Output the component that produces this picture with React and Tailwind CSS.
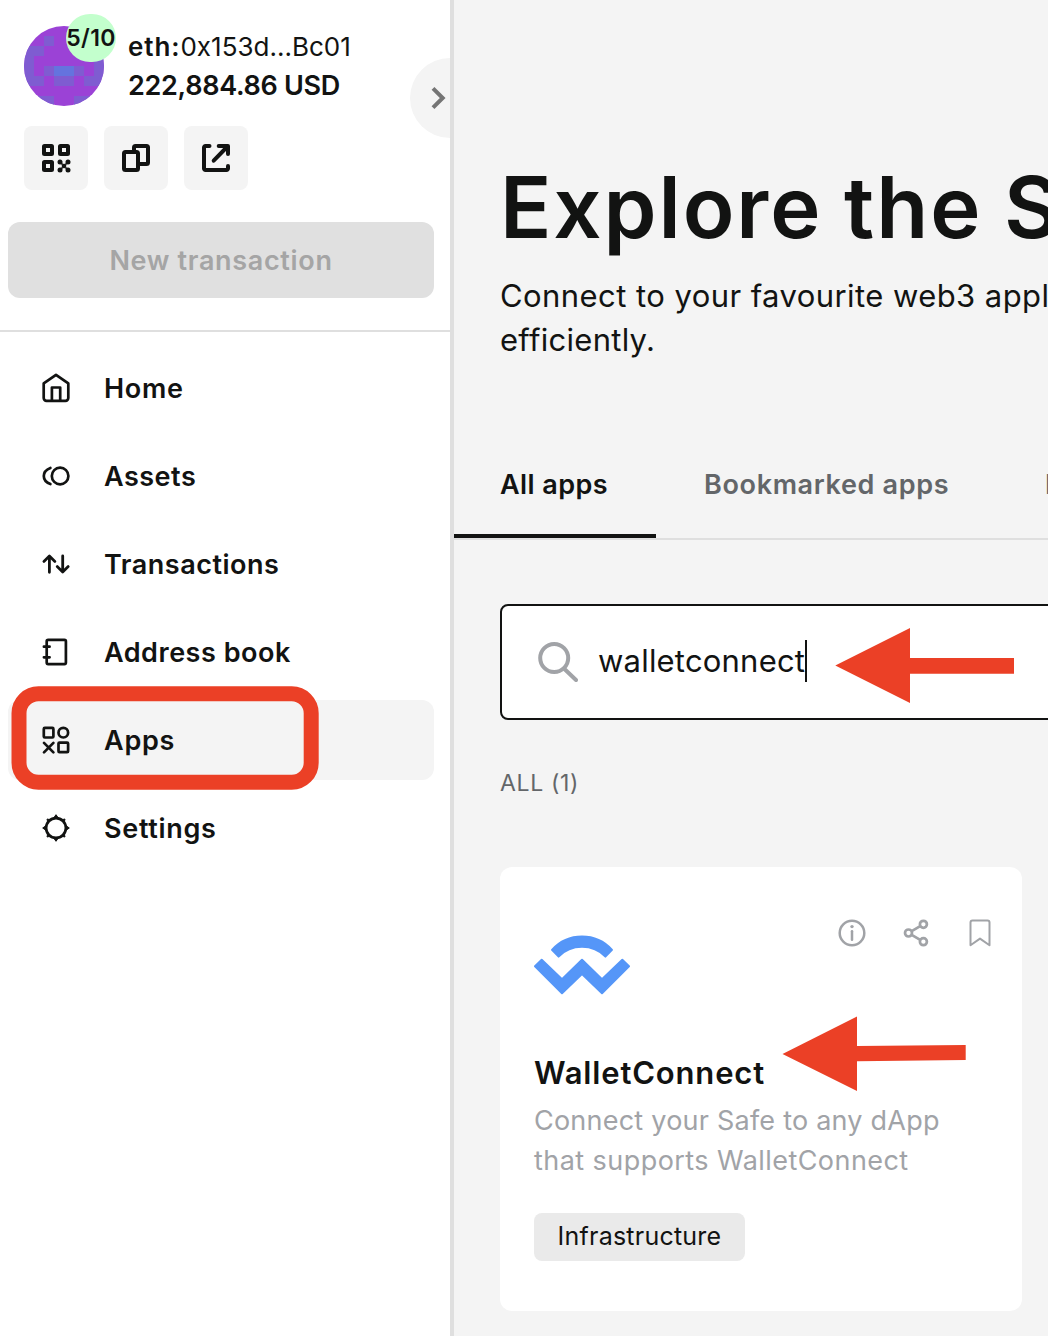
import React from "react";

const AVATAR = [
  "........",
  "..s..s..",
  "ss....ss",
  "s......s",
  "s.sbbs.s",
  "ss.ss.ss",
  "........",
  ".ss..ss.",
];
const AVATAR_COLORS = { s: "#7f5cd1", b: "#6573de" };

function Avatar() {
  return (
    <div className="relative h-20 w-20 shrink-0">
      <svg viewBox="0 0 80 80" className="h-20 w-20 rounded-full bg-[#9b42d6]" shapeRendering="crispEdges">
        {AVATAR.flatMap((row, y) =>
          [...row].map((c, x) =>
            c === "." ? null : (
              <rect key={`${x}-${y}`} x={x * 10} y={y * 10} width="10" height="10" fill={AVATAR_COLORS[c]} />
            )
          )
        )}
      </svg>
      <div className="absolute -top-3 left-[42px] flex h-12 w-[50px] items-center justify-center rounded-full bg-[#c3ffcd]">
        <span className="text-[23px] leading-none font-semibold tracking-[0.36px]">5/10</span>
      </div>
    </div>
  );
}

function IconButton({ children }) {
  return (
    <button className="flex h-16 w-16 items-center justify-center rounded-lg bg-[#f4f4f4]">
      <svg viewBox="0 0 32 32" className="h-8 w-8" fill="none" stroke="#121312" strokeWidth="4" strokeLinejoin="round" strokeLinecap="round">
        {children}
      </svg>
    </button>
  );
}

const icons = {
  home: (
    <>
      <path d="M3.7 11.4 16 2.8l12.3 8.6V26a2.8 2.8 0 0 1-2.8 2.8h-19A2.8 2.8 0 0 1 3.7 26Z" />
      <path d="M11.9 28.6V15.5h8.3v13.1" />
    </>
  ),
  assets: (
    <>
      <circle cx="20.1" cy="16" r="8.3" />
      <path d="M10.400 7.900C6 9.600 3.800 12.400 3.800 16s2.200 6.500 6.600 8.100" />
    </>
  ),
  transactions: (
    <g strokeWidth="2.800">
      <path d="M9.400 24.300V8.200M3.900 13.400 9.400 8.100l5.500 5.300" />
      <path d="M22.700 7.900v16.100M17.200 18.600l5.500 5.300 5.500-5.300" />
    </g>
  ),
  book: (
    <>
      <rect x="6.700" y="3.900" width="19.200" height="24.200" rx="1.500" />
      <path d="M3.900 10.700h5.700M3.900 21.300h5.700" />
    </>
  ),
  apps: (
    <>
      <rect x="3.800" y="3.900" width="9.600" height="9.600" rx="1" />
      <circle cx="23.300" cy="8.700" r="4.800" />
      <path d="m4 18.900 9.400 9.500M13.400 18.900l-9.400 9.500" />
      <rect x="18.500" y="18.600" width="9.600" height="9.600" rx="1" />
    </>
  ),
  settings: (
    <>
      <circle cx="16" cy="16" r="9.900" />
      <path
        d="M14 5.500 16 2.700l2 2.800ZM14 26.500l2 2.800 2-2.800ZM5.500 14 2.700 16l2.800 2ZM26.500 14l2.800 2-2.800 2ZM10 7.700 7 7l.7 3ZM22 7.700 25 7l-.7 3ZM10 24.300 7 25l.7-3ZM22 24.300l3 .7-.7-3Z"
        fill="#121312"
        strokeWidth="1"
      />
    </>
  ),
};

const NAV = [
  { id: "home", label: "Home", cls: "tracking-[0.71px]" },
  { id: "assets", label: "Assets", cls: "tracking-[0.5px]" },
  { id: "transactions", label: "Transactions", cls: "tracking-[0.51px]" },
  { id: "book", label: "Address book", cls: "tracking-[0.52px]" },
  { id: "apps", label: "Apps", cls: "tracking-[0.75px]", active: true },
  { id: "settings", label: "Settings", cls: "tracking-[0.68px]" },
];

function NavItem({ item }) {
  return (
    <a className={"relative flex h-20 items-center gap-8 rounded-xl px-8 " + (item.active ? "bg-[#f4f4f4]" : "")}>
      <svg viewBox="0 0 32 32" className="h-8 w-8 shrink-0" fill="none" stroke="#121312" strokeWidth="2.700" strokeLinecap="round" strokeLinejoin="round">
        {icons[item.id]}
      </svg>
      <span className={"text-[27px] leading-none font-semibold " + item.cls}>{item.label}</span>
      {item.active && (
        <svg viewBox="0 0 308 104" className="absolute -top-[14px] left-[3px] h-[104px] w-[308px]" fill="none" stroke="#eb4026" strokeWidth="15">
          <rect x="8" y="7.800" width="292.200" height="88.400" rx="19.500" />
        </svg>
      )}
    </a>
  );
}

function Sidebar() {
  return (
    <aside className="relative w-[454px] shrink-0 overflow-hidden border-r-4 border-[#dfdfdf] bg-white">
      <div className="flex items-center gap-6 pt-[26px] pl-6">
        <Avatar />
        <div className="flex flex-col whitespace-nowrap">
          <div className="flex h-[39px] items-center text-[26px] leading-none">
            <span className="font-semibold tracking-[0.91px]">eth:</span>
            <span>0x153d...Bc01</span>
          </div>
          <div className="flex h-[39px] items-center text-[27px] leading-none font-semibold tracking-[-0.3px]">
            222,884.86 USD
          </div>
        </div>
      </div>

      <div className="mt-5 flex gap-4 pl-6">
        <IconButton>
          <rect x="4" y="4" width="8" height="8" rx="0.500" />
          <rect x="20" y="4" width="8" height="8" rx="0.500" />
          <rect x="4" y="20" width="8" height="8" rx="0.500" />
          <path d="m20.500 20.500 7 7M27.500 20.500l-7 7" stroke="#555" strokeWidth="2" />
          <g fill="#121312" stroke="none">
            <circle cx="20" cy="20" r="2.500" />
            <circle cx="28" cy="20" r="2.500" />
            <circle cx="24" cy="24" r="2.300" />
            <circle cx="20" cy="28" r="2.500" />
            <circle cx="28" cy="28" r="2.500" />
          </g>
        </IconButton>
        <IconButton>
          <rect x="14" y="4" width="14" height="18" rx="1.500" />
          <rect x="4" y="10" width="14" height="18" rx="1.500" fill="#f4f4f4" />
        </IconButton>
        <IconButton>
          <path d="M9.500 4H5.500A1.500 1.500 0 0 0 4 5.500v21A1.500 1.500 0 0 0 5.500 28h21a1.500 1.500 0 0 0 1.500-1.500V24" />
          <path d="M18.700 4H28v8M27 5 13.700 18.700" />
        </IconButton>
      </div>

      <div className="px-2 pt-8 pr-4">
        <button className="flex h-[76px] w-full items-center justify-center rounded-xl bg-[#e0e0e0] text-[27px] leading-none font-semibold tracking-[0.67px] text-[#a5a5a5]">
          New transaction
        </button>
      </div>

      <nav className="mt-8 flex flex-col gap-2 border-t-2 border-[#dfdfdf] pt-4 pr-4 pl-2">
        {NAV.map((item) => (
          <NavItem key={item.id} item={item} />
        ))}
      </nav>

      <div className="absolute top-[58px] -right-10 h-20 w-20 rounded-full bg-[#f4f4f4]">
        <svg viewBox="0 0 40 80" className="h-20 w-10" fill="none" stroke="#757575" strokeWidth="4">
          <path d="m23 30.300 9.700 9.700-9.700 9.700" />
        </svg>
      </div>
    </aside>
  );
}

function AppCard() {
  return (
    <article className="relative mt-[70px] h-[444px] w-[522px] rounded-xl bg-white px-[34px] pt-9">
      <div className="flex h-[108px] justify-between">
        <svg viewBox="0 0 96 96" className="mt-[14px] h-24 w-24 shrink-0" fill="#5596f8" stroke="#5596f8" strokeWidth="2" strokeLinejoin="round">
          <path d="M1 49.200 7.700 42.800 28 62.300 48 42.800l20 19.500 20.300-19.500L95 49.200 68 76.200 48 57.100 28 76.200Z" />
          <path d="M18 32.800C34 15 62 15 78 32.800l-6.600 6.800C59 26.500 37 26.500 24.600 39.600Z" />
        </svg>
        <div className="-mr-2 flex h-[60px] items-center gap-8">
          <svg viewBox="0 0 32 32" className="h-8 w-8" fill="none" stroke="#a1a3a7" strokeWidth="2.500" strokeLinecap="round">
            <circle cx="16" cy="16" r="12.300" />
            <path d="M16 14.300v8.500" />
            <circle cx="16" cy="9.600" r="1.700" fill="#a1a3a7" stroke="none" />
          </svg>
          <svg viewBox="0 0 32 32" className="h-8 w-8" fill="none" stroke="#a1a3a7" strokeWidth="2.700">
            <circle cx="23.400" cy="7.300" r="3.500" />
            <circle cx="23.400" cy="24.700" r="3.500" />
            <circle cx="8.500" cy="16" r="3.500" />
            <path d="m11.700 14.100 8.500-5M11.700 17.900l8.500 5" />
          </svg>
          <svg viewBox="0 0 32 32" className="h-8 w-8" fill="none" stroke="#a1a3a7" strokeWidth="2" strokeLinejoin="round">
            <path d="M6.500 28.200V5.600a2 2 0 0 1 2-2h15a2 2 0 0 1 2 2v22.600L16 21.600Z" />
          </svg>
        </div>
      </div>
      <h2 className="mt-[42px] text-[31px] leading-10 font-semibold tracking-[0.83px]">WalletConnect</h2>
      <p className="mt-2 text-[27px] leading-10 tracking-[0.23px] whitespace-nowrap text-[#a1a3a7]">
        Connect your Safe to any dApp
        <br />
        <span className="tracking-[0.44px]">that supports WalletConnect</span>
      </p>
      <span className="mt-8 inline-flex h-12 w-[211px] items-center justify-center rounded-lg bg-[#eaeaea] pb-0.5 text-[25px] leading-none tracking-[0.23px]">
        Infrastructure
      </span>
      <svg viewBox="0 0 184 76" className="absolute top-[149px] left-[282px] h-[76px] w-[184px]" fill="#eb4026">
        <path d="M0.500 38 75 0.500V30L183.700 29v15L75 45.300V75Z" />
      </svg>
    </article>
  );
}

export default function App() {
  return (
    <div className="flex h-[1336px] w-full overflow-hidden bg-[#f4f4f4] font-['Inter',sans-serif] text-[#121312]">
      <Sidebar />
      <main className="min-w-0 flex-1 overflow-hidden">
        <header className="w-[1200px] pt-[158px] pl-[46px]">
          <h1 className="text-[85px] leading-[100px] font-semibold tracking-[1.9px] [word-spacing:-1.500px] whitespace-nowrap">
            Explore the Safe Apps
          </h1>
          <p className="mt-4 text-[31px] leading-[44px] tracking-[0.43px] whitespace-nowrap">
            Connect to your favourite web3 applications
            <br />
            <span className="tracking-[0.29px]">efficiently.</span>
          </p>
        </header>

        <div className="mt-[68px] flex h-[110px] w-[1200px] border-b-2 border-[#dfdfdf] text-[27px] leading-[110px] font-semibold whitespace-nowrap">
          <div className="h-[108px] w-[202px] border-b-4 border-[#121312] pl-[46px] tracking-[0.42px]">All apps</div>
          <div className="h-[108px] w-[341px] pl-[48px] tracking-[0.65px] text-[#636669]">Bookmarked apps</div>
          <div className="h-[108px] pl-[48px] tracking-[0.6px] text-[#636669]">My custom apps</div>
        </div>

        <section className="pt-16 pl-[46px]">
          <div className="relative flex h-[116px] w-[700px] items-center rounded-lg border-2 border-[#121312] bg-white pl-9">
            <svg viewBox="0 0 40 40" className="h-10 w-10 shrink-0" fill="none" stroke="#a1a3a7" strokeWidth="4" strokeLinecap="round">
              <circle cx="16.200" cy="16" r="14" />
              <path d="m27 27.500 11 10.500" />
            </svg>
            <span className="ml-5 pb-[3px] text-[31px] leading-none tracking-[0.2px]">walletconnect</span>
            <span className="-mt-0.5 h-[42px] w-0.5 bg-[#121312]" />
            <svg viewBox="0 0 180 76" className="absolute top-[22px] left-[333px] h-[76px] w-[180px]" fill="#eb4026">
              <path d="M0.300 37.500 75 0v30h104v15.800H75V75Z" />
            </svg>
          </div>
          <div className="mt-[50px] text-[23px] leading-[27px] tracking-[0.65px] text-[#636669]">ALL (1)</div>
          <AppCard />
        </section>
      </main>
    </div>
  );
}
